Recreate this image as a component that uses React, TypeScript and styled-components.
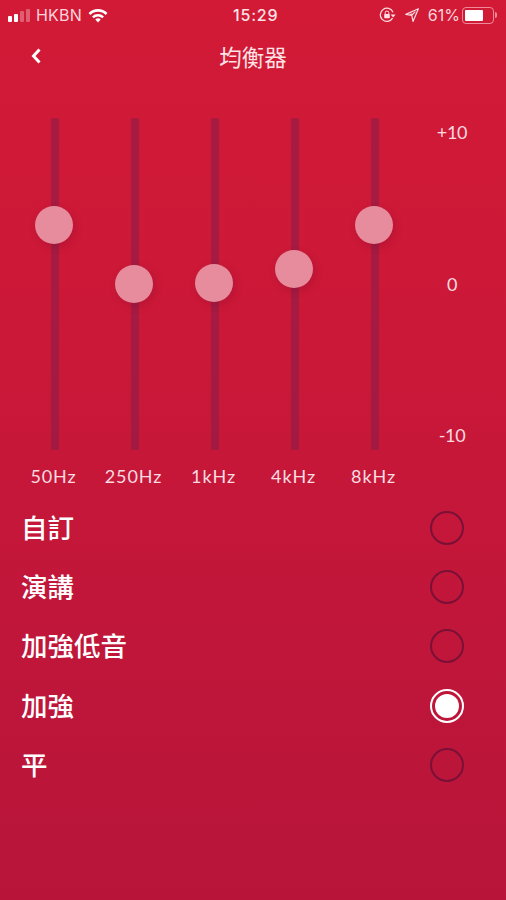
import React from 'react'
import styled, { createGlobalStyle } from 'styled-components'

const bands = [
    { label: '50Hz', thumb: 107 },
    { label: '250Hz', thumb: 166 },
    { label: '1kHz', thumb: 165 },
    { label: '4kHz', thumb: 151 },
    { label: '8kHz', thumb: 107 },
]

const presets = [
    { name: '自訂', selected: false },
    { name: '演講', selected: false },
    { name: '加強低音', selected: false },
    { name: '加強', selected: true },
    { name: '平', selected: false },
]

const GlobalStyle = createGlobalStyle`
    html, body { margin: 0; padding: 0; background: #b8143a; }
    * { box-sizing: border-box; }
`

export default function App() {
    return <Page>
        <GlobalStyle />
        <StatusBar>
            <StatusSide>
                <Signal>
                    <Bar $h={6} $on /><Bar $h={8} $on /><Bar $h={11} /><Bar $h={13} />
                </Signal>
                <Carrier>HKBN</Carrier>
                <svg width="20" height="15" viewBox="0 0 20 15">
                    <path d="M0.5 5 A13.5 13.5 0 0 1 19.5 5 L17.6 7 A10.8 10.8 0 0 0 2.4 7 Z" fill="#fff" />
                    <path d="M4 8.4 A8.8 8.8 0 0 1 16 8.4 L14.2 10.2 A6.2 6.2 0 0 0 5.8 10.2 Z" fill="#fff" />
                    <path d="M7.3 11.5 A3.9 3.9 0 0 1 12.7 11.5 L10 14.4 Z" fill="#fff" />
                </svg>
            </StatusSide>
            <Clock>15:29</Clock>
            <StatusRight>
                <svg width="17" height="16" viewBox="0 0 17 16">
                    <path d="M13.6 11.2 A6.6 6.6 0 1 1 14 5.2" fill="none" stroke="#fbdde2" strokeWidth="1.3" />
                    <path d="M11.6 7.4 L16.6 7.4 L14.1 10.4 Z" fill="#fbdde2" />
                    <rect x="5.2" y="7" width="5.6" height="4.2" rx="0.6" fill="#fbdde2" />
                    <path d="M6.2 7 V5.8 A1.8 1.8 0 0 1 9.8 5.8 V7" fill="none" stroke="#fbdde2" strokeWidth="1" />
                </svg>
                <svg width="14" height="14" viewBox="0 0 14 14">
                    <path d="M13.4 0.8 L0.8 6.4 L6.8 7.4 L8 13.4 Z M10.4 3.6 L7.6 6.4 L5.4 6" fill="none" stroke="#fbdde2" strokeWidth="1.2" strokeLinejoin="round" />
                </svg>
                <Percent>61%</Percent>
                <Battery><BatteryFill /></Battery>
                <BatteryNub />
            </StatusRight>
        </StatusBar>
        <NavBar>
            <BackIcon width="12" height="18" viewBox="0 0 12 18">
                <path d="M9.5 2.5 L3.5 9 L9.5 15.5" fill="none" stroke="#fff" strokeWidth="3" />
            </BackIcon>
            <Title>均衡器</Title>
        </NavBar>
        <Equalizer>
            <Bands>
                {bands.map(b => <Band key={b.label}>
                    <Track><Thumb $top={b.thumb} /></Track>
                    <BandLabel>{b.label}</BandLabel>
                </Band>)}
            </Bands>
            <Scale>
                <ScaleValue>+10</ScaleValue>
                <ScaleValue>0</ScaleValue>
                <ScaleValue>-10</ScaleValue>
            </Scale>
        </Equalizer>
        <PresetList>
            {presets.map(p => <Preset key={p.name}>
                <PresetName>{p.name}</PresetName>
                <Radio $selected={p.selected}>{p.selected && <RadioDot />}</Radio>
            </Preset>)}
        </PresetList>
    </Page>
}

const Page = styled.div`
    width: 506px;
    height: 900px;
    overflow: hidden;
    display: flex;
    flex-direction: column;
    background: linear-gradient(180deg, #d21a36 0%, #cc1838 35%, #c0163a 70%, #b8143a 100%);
    color: #fff;
    font-family: Inter, "Noto Sans CJK TC", sans-serif;
`
const StatusBar = styled.div`
    height: 30px;
    flex: none;
    display: flex;
    align-items: center;
    justify-content: space-between;
    position: relative;
    padding: 0 8px;
    font-size: 16px;
`
const StatusSide = styled.div`
    display: flex;
    align-items: center;
`
const StatusRight = styled(StatusSide)`
    margin-right: 1px;
    svg + svg { margin-left: 9px; }
`
const Signal = styled.div`
    display: flex;
    align-items: flex-end;
    gap: 2px;
    width: 22px;
    height: 13px;
    margin-top: 1px;
    margin-right: 6px;
`
const Bar = styled.span<{ $h: number; $on?: boolean }>`
    width: 4px;
    height: ${p => p.$h}px;
    border-radius: 1px;
    background: ${p => p.$on ? '#fff' : 'rgba(255,255,255,0.3)'};
`
const Carrier = styled.span`
    font-family: Inter, sans-serif;
    color: #f9d5db;
    font-size: 16px;
    margin-right: 6px;
    letter-spacing: 0.2px;
`
const Clock = styled.span`
    position: absolute;
    left: 233px;
    font-weight: 500;
    color: #fbe3e6;
    letter-spacing: 0.8px;
`
const Percent = styled.span`
    margin-left: 9px;
    color: #f9d5db;
`
const Battery = styled.div`
    width: 32px;
    height: 17px;
    margin-left: 2px;
    padding: 2px;
    border: 1px solid #ee8a9a;
    border-radius: 4px;
`
const BatteryFill = styled.div`
    width: 18px;
    height: 100%;
    background: #fff;
    border-radius: 1px;
`
const BatteryNub = styled.div`
    width: 2px;
    height: 6px;
    margin-left: 1px;
    background: #ee8a9a;
    border-radius: 0 2px 2px 0;
`
const NavBar = styled.div`
    height: 56px;
    flex: none;
    display: flex;
    align-items: center;
    justify-content: center;
    position: relative;
`
const BackIcon = styled.svg`
    position: absolute;
    left: 30px;
    top: 17px;
`
const Title = styled.div`
    font-size: 22.5px;
    line-height: 30px;
    margin-top: 0;
    color: #fbe3e6;
    font-weight: 400;
`
const Equalizer = styled.div`
    flex: none;
    display: flex;
    margin-top: 32px;
    padding-left: 15px;
`
const Bands = styled.div`
    display: flex;
`
const Band = styled.div`
    width: 80px;
    display: flex;
    flex-direction: column;
    align-items: center;
`
const Track = styled.div`
    position: relative;
    width: 8px;
    height: 332px;
    background: rgba(125, 30, 75, 0.5);
    border-radius: 2px;
`
const Thumb = styled.div<{ $top: number }>`
    position: absolute;
    left: -16px;
    top: ${p => p.$top - 19}px;
    width: 38px;
    height: 38px;
    border-radius: 50%;
    background: #e68c9d;
    box-shadow: 2px 3px 8px rgba(90, 10, 40, 0.2);
`
const BandLabel = styled.div`
    margin-top: 16px;
    margin-left: -3px;
    font-family: Lato, sans-serif;
    font-size: 18px;
    line-height: 20px;
    letter-spacing: 0.9px;
    color: #f9dbe0;
    white-space: nowrap;
`
const Scale = styled.div`
    width: 60px;
    height: 327px;
    margin-left: 7px;
    display: flex;
    flex-direction: column;
    justify-content: space-between;
    align-items: center;
    padding-top: 4px;
`
const ScaleValue = styled.div`
    font-family: Lato, sans-serif;
    font-size: 18px;
    line-height: 20px;
    letter-spacing: -0.3px;
    color: #f9dbe0;
`
const PresetList = styled.div`
    margin-top: 12px;
    padding: 0 42px 0 21px;
    display: flex;
    flex-direction: column;
`
const Preset = styled.div`
    height: 59.4px;
    display: flex;
    align-items: center;
    justify-content: space-between;
`
const PresetName = styled.div`
    font-family: "Noto Sans CJK TC", sans-serif;
    font-size: 26.5px;
    line-height: 36px;
    margin-top: -2px;
    font-weight: 500;
    color: #fff;
`
const Radio = styled.div<{ $selected: boolean }>`
    width: 34px;
    height: 34px;
    border-radius: 50%;
    display: flex;
    align-items: center;
    justify-content: center;
    border: 2px solid ${p => p.$selected ? '#fff' : 'rgba(110, 15, 55, 0.85)'};
`
const RadioDot = styled.div`
    width: 24px;
    height: 24px;
    border-radius: 50%;
    background: #fff;
`
